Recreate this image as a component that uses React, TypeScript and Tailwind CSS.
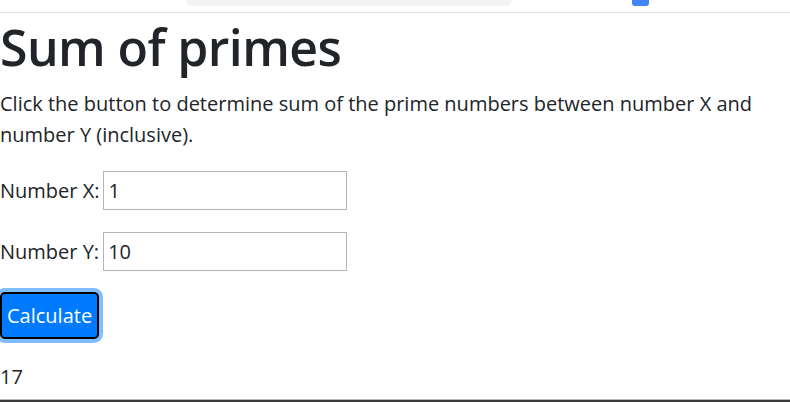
import { useState } from 'react';

function isPrime(n: number) {
  if (n < 2) return false;
  for (let i = 2; i * i <= n; i++) if (n % i === 0) return false;
  return true;
}

export default function App() {
  const [x, setX] = useState('1');
  const [y, setY] = useState('10');
  const [sum, setSum] = useState<number | null>(17);

  function hitung() {
    const a = parseInt(x, 10);
    const b = parseInt(y, 10);
    let s = 0;
    for (let i = Math.min(a, b); i <= Math.max(a, b); i++) if (isPrime(i)) s += i;
    setSum(s);
  }

  return (
    <div className="w-[790px] h-[402px] overflow-hidden bg-white flex flex-col font-['Open_Sans',sans-serif] text-[#212529]">
      {/* browser toolbar edge */}
      <div className="h-[13px] shrink-0 border-b border-[#e4e4e4] flex items-start">
        <div className="ml-[186px] w-[326px] h-[6px] bg-[#f1f3f4] rounded-b-[6px]" />
        <div className="ml-[120px] w-[17px] h-[6px] bg-[#4285f4] rounded-b-[3px]" />
      </div>

      <div className="flex-1 flex flex-col">
        <h1 className="mt-[4px] text-[50px] leading-[61px] font-semibold tracking-[-0.6px] mb-[10px]">Sum of primes</h1>
        <p className="text-[20px] leading-[31px] mb-[21px]">
          Click the button to determine sum of the prime numbers between number X and number Y (inclusive).
        </p>

        <div className="flex items-center text-[20px] mb-[22px]">
          <label htmlFor="x">Number X:</label>
          <input
            id="x"
            value={x}
            onChange={(e) => setX(e.target.value)}
            className="ml-[4px] w-[244px] h-[39px] border border-[#b4b4b4] px-[4px] text-[20px] outline-none"
          />
        </div>
        <div className="flex items-center text-[20px] mb-[21px]">
          <label htmlFor="y">Number Y:</label>
          <input
            id="y"
            value={y}
            onChange={(e) => setY(e.target.value)}
            className="ml-[4px] w-[244px] h-[39px] border border-[#b4b4b4] px-[4px] text-[20px] outline-none"
          />
        </div>

        <div>
          <button
            onClick={hitung}
            className="h-[47px] px-[5px] bg-[#007bff] text-white text-[20px] rounded-[5px] border-2 border-black ring-4 ring-[#80bdff]"
          >
            Calculate
          </button>
        </div>

        <p className="mt-[23px] text-[20px] leading-[30px]">{sum}</p>
      </div>
      <div className="h-[1px] bg-[#b8b8b8] shrink-0" />
      <div className="h-[2px] bg-[#3a3a3a] shrink-0" />
    </div>
  );
}
